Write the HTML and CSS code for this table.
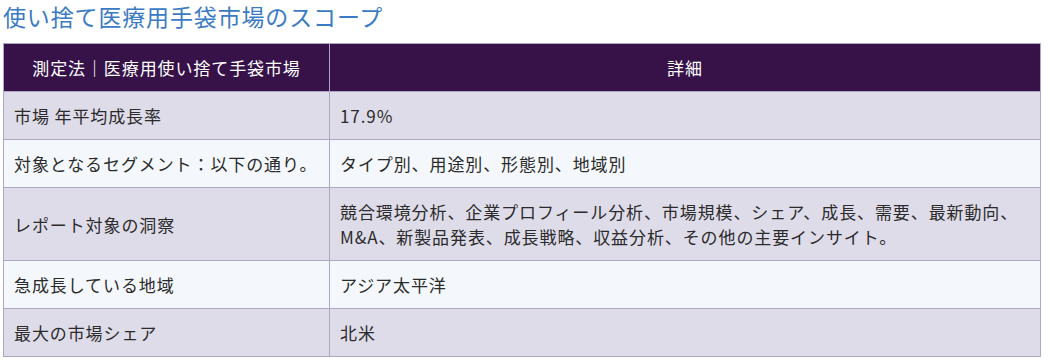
FILE: index.html
```html
<!DOCTYPE html>
<html lang="ja">
<head>
<meta charset="utf-8">
<link rel="stylesheet" href="styles.css">
</head>
<body>
<h2 class="title">使い捨て医療用手袋市場のスコープ</h2>
<table class="scope">
  <thead>
    <tr><th class="col1">測定法｜医療用使い捨て手袋市場</th><th>詳細</th></tr>
  </thead>
  <tbody>
    <tr><td>市場 年平均成長率</td><td>17.9%</td></tr>
    <tr><td>対象となるセグメント：以下の通り。</td><td>タイプ別、用途別、形態別、地域別</td></tr>
    <tr><td>レポート対象の洞察</td><td>競合環境分析、企業プロフィール分析、市場規模、シェア、成長、需要、最新動向、M&amp;A、新製品発表、成長戦略、収益分析、その他の主要インサイト。</td></tr>
    <tr><td>急成長している地域</td><td>アジア太平洋</td></tr>
    <tr><td>最大の市場シェア</td><td>北米</td></tr>
  </tbody>
</table>
</body>
</html>
```
FILE: styles.css
```css
html, body {
  margin: 0;
  padding: 0;
  background: #ffffff;
}
body {
  padding: 0 9px 0 3px;
  font-family: "Noto Sans CJK JP", "Noto Sans", sans-serif;
  color: #2b2b2b;
}
.title {
  margin: 0;
  height: 43px;
  font-size: 23px;
  font-weight: 400;
  line-height: 32px;
  color: #3b7bc4;
  letter-spacing: 0.85px;
}
.scope {
  width: 100%;
  border-collapse: collapse;
  font-size: 17px;
  letter-spacing: 0.9px;
  line-height: 25px;
}
.scope th, .scope td {
  border: 1px solid #aca7c2;
  padding: 11px 10px;
}
.scope th {
  background: #361249;
  color: #ffffff;
  font-weight: 400;
  text-align: center;
}
.scope th.col1 { width: 305px; }
.scope td { text-align: left; }
.scope tbody tr:nth-child(odd) td { background: #dfdcea; }
.scope tbody tr:nth-child(even) td { background: #f4f8fc; }
```
